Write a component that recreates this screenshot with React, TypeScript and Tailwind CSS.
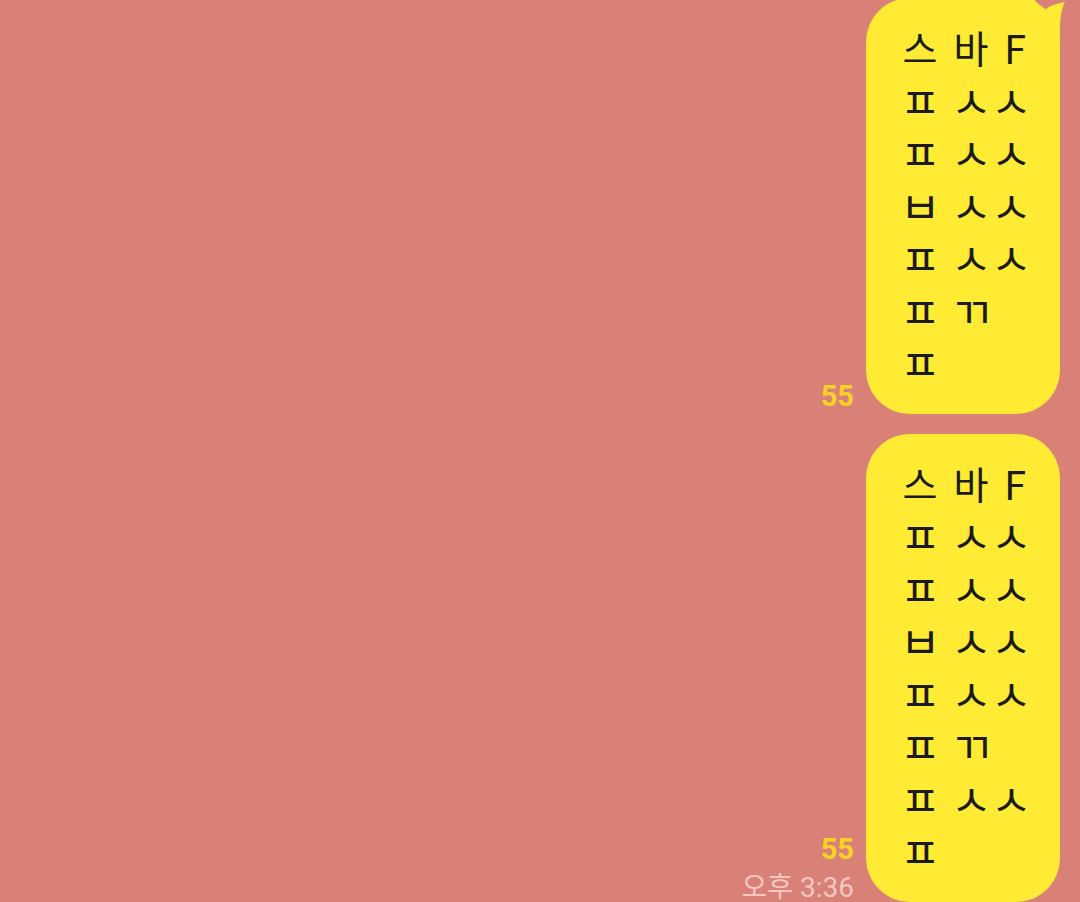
const lines1 = ['스 바 F', 'ㅍ ㅅㅅ', 'ㅍ ㅅㅅ', 'ㅂ ㅅㅅ', 'ㅍ ㅅㅅ', 'ㅍ ㄲ', 'ㅍ'];
const lines2 = ['스 바 F', 'ㅍ ㅅㅅ', 'ㅍ ㅅㅅ', 'ㅂ ㅅㅅ', 'ㅍ ㅅㅅ', 'ㅍ ㄲ', 'ㅍ ㅅㅅ', 'ㅍ'];

const kr = { fontFamily: '"Noto Sans CJK KR", "Noto Sans", sans-serif' };
const ro = { fontFamily: 'Roboto, "Noto Sans CJK KR", sans-serif' };

const isJamo = (c: string) => c >= '\u3131' && c <= '\u318e';
const isSyllable = (c: string) => c >= '\uac00' && c <= '\ud7a3';

function Line({ text }: { text: string }) {
  return (
    <div className="relative flex h-[52.5px] items-center text-[#1b1b1b]" style={kr}>
      {text.split('').map((c, i) => {
        if (c === ' ') return <span key={i} className="w-[11px] shrink-0" />;
        if (isJamo(c))
          return (
            <span key={i} className="w-[40px] shrink-0 text-center text-[44px] leading-none">
              {c}
            </span>
          );
        if (isSyllable(c))
          return (
            <span key={i} className="w-[40px] shrink-0 text-center text-[38px] leading-none">
              {c}
            </span>
          );
        return (
          <span key={i} className="shrink-0 pl-[2px] text-[40px] leading-none">
            {c}
          </span>
        );
      })}
    </div>
  );
}

function Bubble({ lines, tail }: { lines: string[]; tail?: boolean }) {
  return (
    <div className="relative w-[194px] shrink-0 rounded-[44px] bg-[#ffeb33] pl-[34px] pt-[23px] pb-[25px]">
      {tail && (
        <svg className="absolute right-[-10px] top-0" width="45" height="42" viewBox="0 0 45 42">
          <path d="M0 0 L5 0 Q14 3 17 14 Q26 6 40 4 Q34 14 35 42 L0 42 Z" fill="#ffeb33" />
        </svg>
      )}
      {lines.map((l, i) => (
        <Line key={i} text={l} />
      ))}
    </div>
  );
}

export default function App() {
  return (
    <div className="h-[902px] w-[1080px] overflow-hidden bg-[#d98177]">
      <div className="mt-[-2px] flex flex-col items-end gap-[20px] pr-[20px]">
        <div className="flex items-end gap-[12px]">
          <div className="mb-[3px] text-[29px] font-bold leading-none text-[#fad226]" style={ro}>
            55
          </div>
          <Bubble lines={lines1} tail />
        </div>
        <div className="flex items-end gap-[12px]">
          <div className="mb-[2px] flex flex-col items-end gap-[12px]">
            <div className="text-[29px] font-bold leading-none text-[#fad226]" style={ro}>
              55
            </div>
            <div className="text-[28px] leading-[24px] text-[#f4c7c0]" style={ro}>
              오후 3:36
            </div>
          </div>
          <Bubble lines={lines2} />
        </div>
      </div>
    </div>
  );
}
